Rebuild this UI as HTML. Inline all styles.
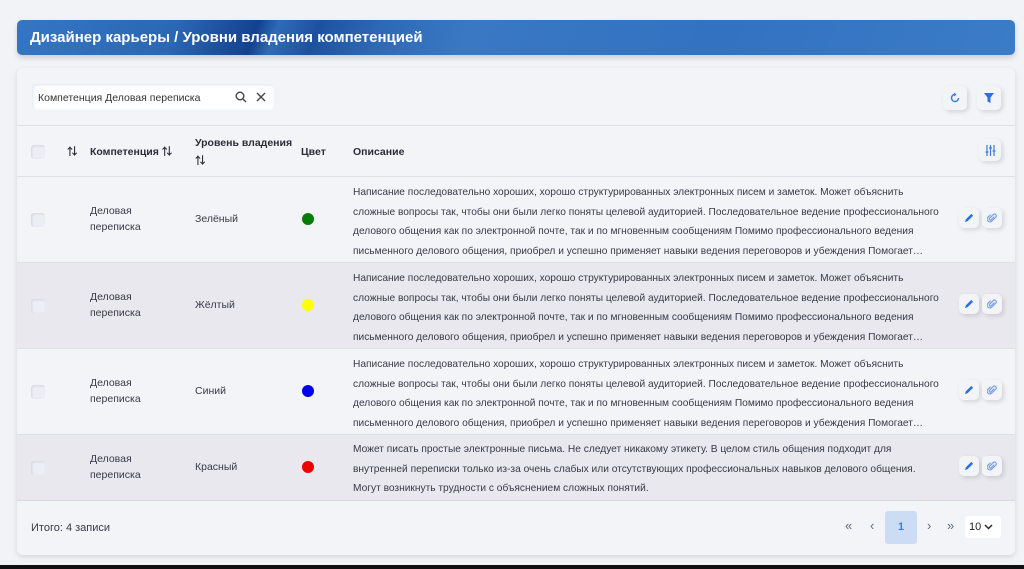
<!DOCTYPE html>
<html><head><meta charset="utf-8"><style>
*{box-sizing:border-box;margin:0;padding:0}
body{width:1024px;height:569px;background:#f2f3f7;font-family:"Liberation Sans","Noto Sans CJK SC",sans-serif;color:#3a3a48;position:relative;overflow:hidden}
.hdr{position:absolute;left:17px;top:20px;width:998px;height:35px;border-radius:5px;background:linear-gradient(110deg,#3576c3 0%,#2a67b5 16%,#14418f 24%,#2e6bb8 26%,#1d51a0 30%,#2d68b5 36%,#3a78c4 45%,#3272c0 70%,#3b7cc8 100%);box-shadow:0 3px 6px rgba(0,0,0,.15);color:#fff;font-weight:bold;font-size:15px;line-height:35px;padding-left:13px}
.card{position:absolute;left:17px;top:68px;width:998px;height:487px;background:#f3f4f8;border-radius:6px;box-shadow:0 2px 6px rgba(0,0,0,.12)}
.search{position:absolute;left:15px;top:16px;width:242px;height:26px;background:#fff;border-radius:4px;box-shadow:inset 1px 1px 3px rgba(100,110,200,.2);font-size:10.5px;line-height:28px;padding-left:6px;color:#333}
.btn{position:absolute;width:24px;height:24px;background:#f3f4f8;border-radius:5px;box-shadow:2px 2px 5px rgba(0,0,0,.13);display:flex;align-items:center;justify-content:center}
.ab{width:20px;height:20px}
.row{position:absolute;left:0;width:998px;border-top:1px solid #dfe0e6}
.gray{background:#e8e8ee}
.t{position:absolute;font-size:10.5px;line-height:16px}
.b{font-weight:bold;font-size:10.5px;color:#2c2c3a}
.cb{position:absolute;left:14px;width:14px;height:14px;border-radius:3px;background:#eceef5;box-shadow:inset 1px 1px 2px rgba(0,0,0,.1)}
.dot{position:absolute;left:285px;width:12px;height:12px;border-radius:50%}
.desc{position:absolute;left:336px;white-space:nowrap;font-size:10.2px;line-height:19.5px;color:#3a3a48}
</style></head><body>
<div class="hdr">Дизайнер карьеры / Уровни владения компетенцией</div>
<div class="card">
 <div class="search">Компетенция Деловая переписка
  <svg style="position:absolute;left:203px;top:7px" width="12" height="12" viewBox="0 0 12 12"><circle cx="5" cy="5" r="3.8" fill="none" stroke="#444" stroke-width="1.4"/><path d="M8 8l3 3" stroke="#444" stroke-width="1.4"/></svg>
  <svg style="position:absolute;left:224px;top:8px" width="10" height="10" viewBox="0 0 10 10"><path d="M1 1l8 8M9 1l-8 8" stroke="#444" stroke-width="1.4"/></svg>
 </div>
 <div class="btn" style="left:926px;top:18px"><svg width="12" height="12" viewBox="0 0 12 12"><path d="M9.5 6A3.5 3.5 0 1 1 6 2.5" fill="none" stroke="#3d7be0" stroke-width="1.5"/><path d="M5 0.5l2.5 2-2.5 2z" fill="#3d7be0"/></svg></div>
 <div class="btn" style="left:960px;top:18px"><svg width="12" height="12" viewBox="0 0 12 12"><path d="M1 1h10L7.5 5.5V11L4.5 9.5V5.5z" fill="#2b6fe0"/></svg></div>
 <div class="row" style="top:57px;height:51px">
  <div class="cb" style="top:19px"></div>
  <div class="t b" style="left:50px;top:18px">⇅</div>
  <div class="t b" style="left:73px;top:18px">Компетенция ⇅</div>
  <div class="t b" style="left:178px;top:9px">Уровень владения</div>
  <div class="t b" style="left:178px;top:27px">⇅</div>
  <div class="t b" style="left:284px;top:18px">Цвет</div>
  <div class="t b" style="left:336px;top:18px">Описание</div>
  <div class="btn" style="left:962px;top:13px;width:22px;height:22px"><svg width="11" height="11" viewBox="0 0 11 11"><path d="M2 0v11M5.5 0v11M9 0v11M0.5 7h3M4 3h3M7.5 6h3" stroke="#3d7be0" stroke-width="1.2"/></svg></div>
 </div>
 <div class="row" style="top:108px;height:86px">
  <div class="cb" style="top:36px"></div>
  <div class="t" style="left:73px;top:26px">Деловая<br>переписка</div>
  <div class="t" style="left:178px;top:34px">Зелёный</div>
  <div class="dot" style="top:36px;background:#067d06"></div>
  <div class="desc" style="top:6px">Написание последовательно хороших, хорошо структурированных электронных писем и заметок. Может объяснить<br>сложные вопросы так, чтобы они были легко поняты целевой аудиторией. Последовательное ведение профессионального<br>делового общения как по электронной почте, так и по мгновенным сообщениям Помимо профессионального ведения<br>письменного делового общения, приобрел и успешно применяет навыки ведения переговоров и убеждения Помогает…</div>
 </div>
 <div class="row gray" style="top:194px;height:86px">
  <div class="cb" style="top:36px"></div>
  <div class="t" style="left:73px;top:26px">Деловая<br>переписка</div>
  <div class="t" style="left:178px;top:34px">Жёлтый</div>
  <div class="dot" style="top:36px;background:#ffff00"></div>
  <div class="desc" style="top:6px">Написание последовательно хороших, хорошо структурированных электронных писем и заметок. Может объяснить<br>сложные вопросы так, чтобы они были легко поняты целевой аудиторией. Последовательное ведение профессионального<br>делового общения как по электронной почте, так и по мгновенным сообщениям Помимо профессионального ведения<br>письменного делового общения, приобрел и успешно применяет навыки ведения переговоров и убеждения Помогает…</div>
 </div>
 <div class="row" style="top:280px;height:86px">
  <div class="cb" style="top:36px"></div>
  <div class="t" style="left:73px;top:26px">Деловая<br>переписка</div>
  <div class="t" style="left:178px;top:34px">Синий</div>
  <div class="dot" style="top:36px;background:#0000ee"></div>
  <div class="desc" style="top:6px">Написание последовательно хороших, хорошо структурированных электронных писем и заметок. Может объяснить<br>сложные вопросы так, чтобы они были легко поняты целевой аудиторией. Последовательное ведение профессионального<br>делового общения как по электронной почте, так и по мгновенным сообщениям Помимо профессионального ведения<br>письменного делового общения, приобрел и успешно применяет навыки ведения переговоров и убеждения Помогает…</div>
 </div>
 <div class="row gray" style="top:366px;height:66px">
  <div class="cb" style="top:26px"></div>
  <div class="t" style="left:73px;top:16px">Деловая<br>переписка</div>
  <div class="t" style="left:178px;top:24px">Красный</div>
  <div class="dot" style="top:26px;background:#ee0000"></div>
  <div class="desc" style="top:5px">Может писать простые электронные письма. Не следует никакому этикету. В целом стиль общения подходит для<br>внутренней переписки только из-за очень слабых или отсутствующих профессиональных навыков делового общения.<br>Могут возникнуть трудности с объяснением сложных понятий.</div>
 </div>
 <div class="row" style="top:432px;height:55px;border-top:1px solid #d8d9e0">
  <div class="t" style="left:14px;top:19px;font-size:11px">Итого: 4 записи</div>
  <div class="t" style="left:828px;top:17px;color:#5a6a90;font-size:13px">«</div>
  <div class="t" style="left:853px;top:17px;color:#5a6a90;font-size:13px">‹</div>
  <div style="position:absolute;left:868px;top:10px;width:32px;height:33px;background:#cddcf5;border-radius:3px;color:#3d7be0;font-size:11px;line-height:33px;text-align:center;font-weight:bold">1</div>
  <div class="t" style="left:910px;top:17px;color:#5a6a90;font-size:13px">›</div>
  <div class="t" style="left:930px;top:17px;color:#5a6a90;font-size:13px">»</div>
  <div style="position:absolute;left:948px;top:15px;width:36px;height:22px;background:#fff;border-radius:3px;font-size:11px;line-height:22px;padding-left:4px;color:#222">10 <svg width="9" height="6" viewBox="0 0 9 6"><path d="M1 1l3.5 3.5L8 1" fill="none" stroke="#222" stroke-width="1.4"/></svg></div>
 </div>
</div>
<div style="position:absolute;left:0;top:565px;width:1024px;height:4px;background:#111"></div>
<div style="position:absolute;left:959px;top:208px" class="btn ab"><svg width="10" height="10" viewBox="0 0 11 11"><path d="M1 10l1-3 6-6 2 2-6 6z" fill="#2b6fe0"/></svg></div>
<div style="position:absolute;left:982px;top:208px" class="btn ab"><svg width="10" height="10" viewBox="0 0 11 11"><path d="M8 4L4.5 7.5a1.2 1.2 0 0 1-1.7-1.7L7 1.6a2 2 0 0 1 2.8 2.8L5 9.2a3 3 0 0 1-4.2-4.2L4 1.8" fill="none" stroke="#7b9ce8" stroke-width="1.3"/></svg></div>
<div style="position:absolute;left:959px;top:294px" class="btn ab"><svg width="10" height="10" viewBox="0 0 11 11"><path d="M1 10l1-3 6-6 2 2-6 6z" fill="#2b6fe0"/></svg></div>
<div style="position:absolute;left:982px;top:294px" class="btn ab"><svg width="10" height="10" viewBox="0 0 11 11"><path d="M8 4L4.5 7.5a1.2 1.2 0 0 1-1.7-1.7L7 1.6a2 2 0 0 1 2.8 2.8L5 9.2a3 3 0 0 1-4.2-4.2L4 1.8" fill="none" stroke="#7b9ce8" stroke-width="1.3"/></svg></div>
<div style="position:absolute;left:959px;top:380px" class="btn ab"><svg width="10" height="10" viewBox="0 0 11 11"><path d="M1 10l1-3 6-6 2 2-6 6z" fill="#2b6fe0"/></svg></div>
<div style="position:absolute;left:982px;top:380px" class="btn ab"><svg width="10" height="10" viewBox="0 0 11 11"><path d="M8 4L4.5 7.5a1.2 1.2 0 0 1-1.7-1.7L7 1.6a2 2 0 0 1 2.8 2.8L5 9.2a3 3 0 0 1-4.2-4.2L4 1.8" fill="none" stroke="#7b9ce8" stroke-width="1.3"/></svg></div>
<div style="position:absolute;left:959px;top:456px" class="btn ab"><svg width="10" height="10" viewBox="0 0 11 11"><path d="M1 10l1-3 6-6 2 2-6 6z" fill="#2b6fe0"/></svg></div>
<div style="position:absolute;left:982px;top:456px" class="btn ab"><svg width="10" height="10" viewBox="0 0 11 11"><path d="M8 4L4.5 7.5a1.2 1.2 0 0 1-1.7-1.7L7 1.6a2 2 0 0 1 2.8 2.8L5 9.2a3 3 0 0 1-4.2-4.2L4 1.8" fill="none" stroke="#7b9ce8" stroke-width="1.3"/></svg></div>
</body></html>
